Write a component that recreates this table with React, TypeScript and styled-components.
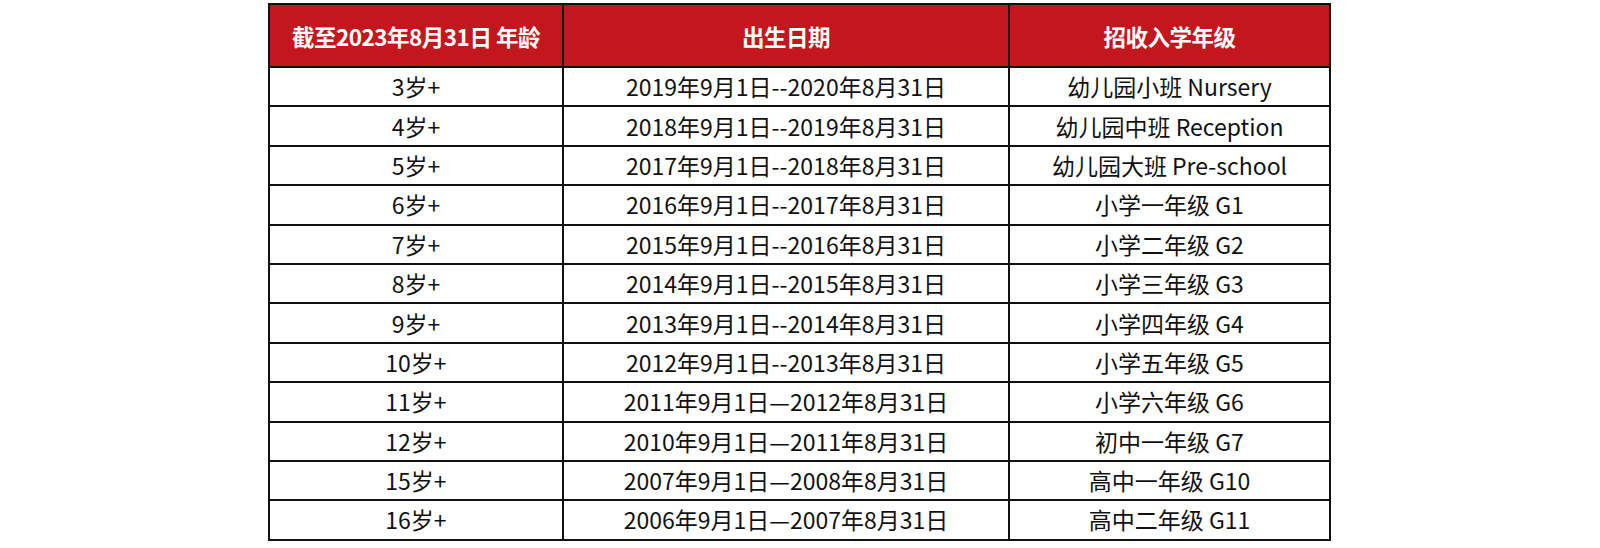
import React from "react";
import styled, { createGlobalStyle } from "styled-components";

const Global = createGlobalStyle`
  html, body { margin: 0; padding: 0; background: #ffffff; }
  body { font-family: "Noto Sans CJK SC", "Noto Sans", sans-serif; }
`;

const Page = styled.div`
  width: 1600px;
  height: 548px;
  padding: 3px 0 0 268px;
  box-sizing: border-box;
`;

const Table = styled.table`
  border-collapse: collapse;
  table-layout: fixed;
  width: 1055px;
  border: 2px solid #111;
`;

const HeadCell = styled.th<{ $w: number }>`
  width: ${(p) => p.$w}px;
  height: 61px;
  background: #c4171d;
  color: #ffffff;
  font-weight: 700;
  font-size: 22.5px;
  letter-spacing: -0.5px;
  text-align: center;
  vertical-align: middle;
  border: 2px solid #111;
  padding: 0;
`;

const Cell = styled.td`
  height: 37.4px;
  color: #111;
  font-size: 23px;
  text-align: center;
  vertical-align: middle;
  border: 2px solid #111;
  padding: 0;
  line-height: 1;
`;

const rows: [string, string, string][] = [
  ["3岁+", "2019年9月1日--2020年8月31日", "幼儿园小班 Nursery"],
  ["4岁+", "2018年9月1日--2019年8月31日", "幼儿园中班 Reception"],
  ["5岁+", "2017年9月1日--2018年8月31日", "幼儿园大班 Pre-school"],
  ["6岁+", "2016年9月1日--2017年8月31日", "小学一年级 G1"],
  ["7岁+", "2015年9月1日--2016年8月31日", "小学二年级 G2"],
  ["8岁+", "2014年9月1日--2015年8月31日", "小学三年级 G3"],
  ["9岁+", "2013年9月1日--2014年8月31日", "小学四年级 G4"],
  ["10岁+", "2012年9月1日--2013年8月31日", "小学五年级 G5"],
  ["11岁+", "2011年9月1日—2012年8月31日", "小学六年级 G6"],
  ["12岁+", "2010年9月1日—2011年8月31日", "初中一年级 G7"],
  ["15岁+", "2007年9月1日—2008年8月31日", "高中一年级 G10"],
  ["16岁+", "2006年9月1日—2007年8月31日", "高中二年级 G11"],
];

export default function App() {
  return (
    <Page>
      <Global />
      <Table>
        <thead>
          <tr>
            <HeadCell $w={292}>截至2023年8月31日 年龄</HeadCell>
            <HeadCell $w={444}>出生日期</HeadCell>
            <HeadCell $w={319}>招收入学年级</HeadCell>
          </tr>
        </thead>
        <tbody>
          {rows.map((r) => (
            <tr key={r[0]}>
              <Cell>{r[0]}</Cell>
              <Cell>{r[1]}</Cell>
              <Cell>{r[2]}</Cell>
            </tr>
          ))}
        </tbody>
      </Table>
    </Page>
  );
}
